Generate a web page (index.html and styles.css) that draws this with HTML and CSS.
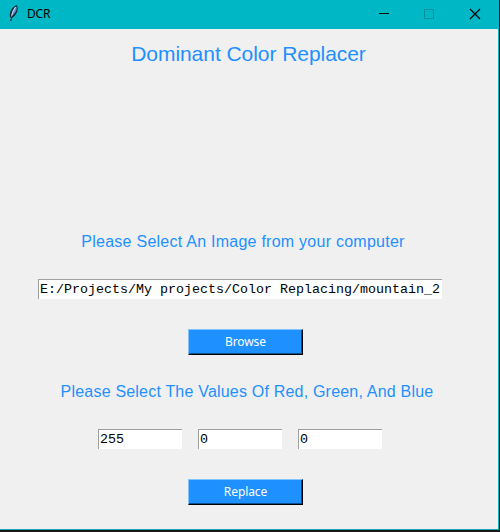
FILE: index.html
```
<!DOCTYPE html>
<html lang="en">
<head>
<meta charset="utf-8">
<title>DCR</title>
<link rel="stylesheet" href="styles.css">
</head>
<body>
<div class="window">
  <header class="titlebar">
    <svg class="feather" width="12" height="18" viewBox="0 0 12 18">
      <path d="M2.200 13.500C.8 9 3 4 8.500 1C11 4 9.500 10 4 14Z" fill="#10202f"/>
      <path d="M3.500 11C4 7 5.500 4 8.300 2.300C9.500 5 8 8.500 4.500 11.500Z" fill="#5795d0"/>
      <path d="M7.500 3L4.500 8.500L3 15" fill="none" stroke="#d6ecf8" stroke-width=".9"/>
      <path d="M3.500 12.500L2.800 17" stroke="#10161d"/>
    </svg>
    <span class="caption">DCR</span>
    <div class="controls">
      <svg width="10" height="10" viewBox="0 0 10 10"><path d="M0 4.500H10" stroke="#000"/></svg>
      <svg width="10" height="10" viewBox="0 0 10 10"><path d="M.5.5h9v9h-9z" fill="none" stroke="#058f99"/></svg>
      <svg width="10" height="10" viewBox="0 0 10 10"><path d="M0 0L10 10M10 0L0 10" stroke="#000" stroke-width="1.200"/></svg>
    </div>
  </header>
  <main class="content">
    <h1 class="heading">Dominant Color Replacer</h1>
    <p class="label label-image">Please Select An Image from your computer</p>
    <div class="entry entry-path">E:/Projects/My projects/Color Replacing/mountain_2</div>
    <button class="button">Browse</button>
    <p class="label label-values">Please Select The Values Of Red, Green, And Blue</p>
    <div class="values">
      <div class="entry">255</div>
      <div class="entry">0</div>
      <div class="entry">0</div>
    </div>
    <button class="button">Replace</button>
  </main>
</div>
</body>
</html>
```
FILE: styles.css
```
* { box-sizing: border-box; }
body {
  margin: 0;
  height: 532px;
  overflow: hidden;
  background: #1b1917;
}
.window {
  width: 499px;
  height: 530px;
  background: #f0f0f0;
  border-right: 1px solid #00b7c3;
  border-bottom: 1px solid #12aab4;
  display: flex;
  flex-direction: column;
}
.titlebar {
  flex: none;
  width: 499px;
  height: 29px;
  background: #00b7c6;
  display: flex;
  align-items: center;
  padding: 0 19px 2px 8px;
}
.feather { margin-top: -1px; }
.caption {
  margin-left: 7px;
  font: 12px/16px "Noto Sans", sans-serif;
  letter-spacing: -0.2px;
  color: #000;
}
.controls {
  margin-left: auto;
  display: flex;
}
.controls svg { display: block; overflow: visible; }
.controls svg + svg { margin-left: 35px; }
.controls svg:last-child { margin-left: 36px; }
.content {
  width: 480px;
  display: flex;
  flex-direction: column;
  align-items: center;
}
.heading, .label {
  margin: 0;
  font-family: "Liberation Sans", Arial, sans-serif;
  font-weight: 400;
  color: #1e90ff;
  white-space: nowrap;
}
.heading {
  margin: 13px 0 0 17px;
  font-size: 21px;
  line-height: 24px;
  letter-spacing: -0.05px;
}
.label {
  font-size: 16px;
  line-height: 20px;
}
.label-image {
  margin: 166px 0 27px 6px;
  letter-spacing: 0.25px;
}
.label-values {
  margin: 27px 0 27px 14px;
  letter-spacing: 0.2px;
}
.entry {
  width: 84px;
  height: 20px;
  background: #fff;
  border-top: 1px solid #a0a0a0;
  border-left: 1px solid #a0a0a0;
  padding-left: 1px;
  font: 13.33px/19px "Liberation Mono", "Courier New", monospace;
  color: #000;
  white-space: nowrap;
  overflow: hidden;
}
.entry-path { width: 404px; }
.values {
  display: flex;
  gap: 16px;
}
.button {
  width: 115px;
  height: 26px;
  margin: 30px 0 0 11px;
  padding: 0;
  border: 1px solid #000;
  border-top-color: #7fc4ff;
  border-left-color: #7fc4ff;
  border-radius: 0;
  background: #1e90ff;
  box-shadow: inset -1px -1px #0b4f94;
  font: 12px/22px "Noto Sans", sans-serif;
  letter-spacing: -0.1px;
  color: #fff;
}
```
